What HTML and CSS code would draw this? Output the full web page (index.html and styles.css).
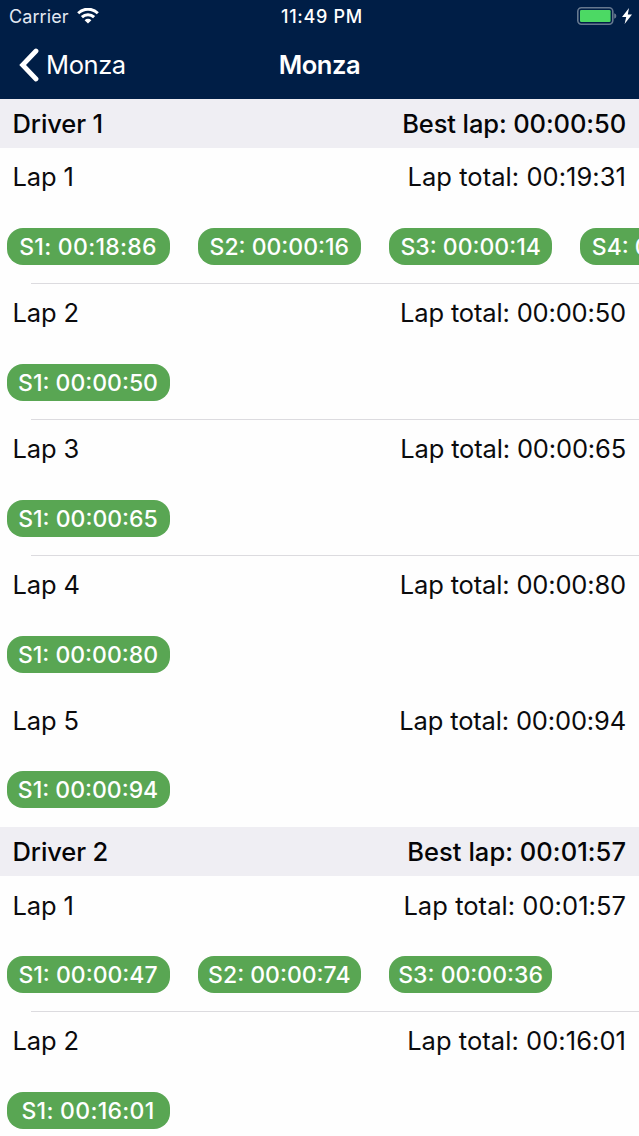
FILE: index.html
```html
<!DOCTYPE html>
<html lang="en">
<head>
    <meta charset="utf-8">
    <title>Monza</title>
    <link rel="stylesheet" href="styles.css">
</head>

<body>
    <header>
        <div class="status">
            <div class="carrier">
                <span>Carrier</span>
                <svg class="wifi" width="22" height="16" viewBox="0 0 22 16">
                    <path d="M1.2 5.2a14 14 0 0 1 19.6 0" />
                    <path d="M4.9 9.2a8.8 8.8 0 0 1 12.2 0" />
                    <path class="dot" d="M11 15.6l-3.4-3.4a4.9 4.9 0 0 1 6.8 0z" />
                </svg>
            </div>
            <div class="time">11:49 PM</div>
            <div class="power">
                <svg class="battery" width="40" height="18" viewBox="0 0 40 18">
                    <rect class="case" x="0.8" y="0.8" width="35" height="16.4" rx="3.6" />
                    <rect class="level" x="3" y="3" width="30.6" height="12" rx="1.2" />
                    <path class="cap" d="M37.2 6.2q2.2 .8 2.2 2.8t-2.2 2.8z" />
                </svg>
                <svg class="bolt" width="10" height="16" viewBox="0 0 10 16">
                    <path d="M7 0L0 9h4.2L2.6 16 10 6.6H5.8z" />
                </svg>
            </div>
        </div>
        <nav>
            <a class="back">
                <svg width="20" height="34" viewBox="0 0 20 34">
                    <path d="M17 3L3.6 17 17 31" />
                </svg>
                <span>Monza</span>
            </a>
            <h1>Monza</h1>
        </nav>
    </header>

    <section>
        <h2><span>Driver 1</span><span class="best">Best lap: 00:00:50</span></h2>
        <div class="lap">
            <div class="info"><span>Lap 1</span><span class="total wide">Lap total: 00:19:31</span></div>
            <div class="sectors">
                <span class="sector wide">S1: 00:18:86</span>
                <span class="sector">S2: 00:00:16</span>
                <span class="sector">S3: 00:00:14</span>
                <span class="sector">S4: 00:00:15</span>
            </div>
        </div>
        <div class="lap">
            <div class="info"><span>Lap 2</span><span class="total">Lap total: 00:00:50</span></div>
            <div class="sectors">
                <span class="sector">S1: 00:00:50</span>
            </div>
        </div>
        <div class="lap">
            <div class="info"><span>Lap 3</span><span class="total">Lap total: 00:00:65</span></div>
            <div class="sectors">
                <span class="sector">S1: 00:00:65</span>
            </div>
        </div>
        <div class="lap no-line">
            <div class="info"><span>Lap 4</span><span class="total">Lap total: 00:00:80</span></div>
            <div class="sectors">
                <span class="sector">S1: 00:00:80</span>
            </div>
        </div>
        <div class="lap no-line">
            <div class="info"><span>Lap 5</span><span class="total">Lap total: 00:00:94</span></div>
            <div class="sectors">
                <span class="sector">S1: 00:00:94</span>
            </div>
        </div>
    </section>

    <section>
        <h2><span>Driver 2</span><span class="best wide">Best lap: 00:01:57</span></h2>
        <div class="lap">
            <div class="info"><span>Lap 1</span><span class="total wide">Lap total: 00:01:57</span></div>
            <div class="sectors">
                <span class="sector">S1: 00:00:47</span>
                <span class="sector">S2: 00:00:74</span>
                <span class="sector">S3: 00:00:36</span>
            </div>
        </div>
        <div class="lap no-line">
            <div class="info"><span>Lap 2</span><span class="total wide">Lap total: 00:16:01</span></div>
            <div class="sectors">
                <span class="sector wide">S1: 00:16:01</span>
            </div>
        </div>
    </section>
</body>
</html>
```
FILE: styles.css
```css
body {
    font-family: Inter, "Liberation Sans", sans-serif;
    font-size: 25.5px;
    color: #0b0b0d;
    background-color: #fefefe;
    height: 1136px;
    margin: 0;
    overflow: hidden;
}
header {
    height: 99px;
    background-color: #001e46;
    color: #fff;
}
.status {
    display: grid;
    grid-template-columns: 1fr auto 1fr;
    align-items: center;
    height: 32px;
    padding: 0 7px 0 9px;
    font-size: 18px;
}
.carrier {
    display: flex;
    align-items: center;
    gap: 8px;
    color: #e3e9f2;
    letter-spacing: 0.1px;
}
.wifi path {
    fill: none;
    stroke: #fff;
    stroke-width: 3;
}
.wifi .dot {
    fill: #fff;
    stroke: none;
}
.time {
    font-weight: 500;
    letter-spacing: 0.7px;
    padding-left: 3px;
}
.power {
    display: flex;
    align-items: center;
    justify-content: flex-end;
    gap: 5px;
}
.case {
    fill: none;
    stroke: #66788f;
    stroke-width: 1.6;
}
.level {
    fill: #4cd964;
}
.cap {
    fill: #66788f;
}
.bolt {
    fill: #fff;
}
nav {
    display: grid;
    grid-template-columns: 1fr auto 1fr;
    align-items: center;
    height: 66px;
    padding: 0 19px;
    letter-spacing: -0.4px;
}
.back {
    display: flex;
    align-items: center;
    gap: 7px;
}
.back span,
h1 {
    line-height: 30px;
    padding-bottom: 1px;
}
.back path {
    fill: none;
    stroke: #fff;
    stroke-width: 4.8;
    stroke-linecap: round;
}
h1 {
    font-size: 25.5px;
    font-weight: 600;
    margin: 0;
}
h2 {
    display: flex;
    justify-content: space-between;
    align-items: center;
    height: 49.2px;
    padding: 0 13px 0 12.5px;
    margin: 0;
    font-size: 25.5px;
    font-weight: 500;
    letter-spacing: -0.1px;
    color: #050507;
    background-color: #efeef3;
}
.lap {
    position: relative;
    height: 135.8px;
}
/* inset separator */
.lap::after {
    content: "";
    position: absolute;
    left: 31px;
    right: 0;
    bottom: 0;
    height: 1px;
    background-color: #dcdbdf;
}
.no-line::after {
    display: none;
}
.info {
    display: flex;
    justify-content: space-between;
    align-items: center;
    height: 57.4px;
    padding: 0 13px 0 12.5px;
    letter-spacing: -0.16px;
}
.sectors {
    display: flex;
    gap: 28.3px;
    padding: 22.6px 0 0 6.5px;
    overflow: hidden;
}
.sector {
    flex: none;
    width: 163px;
    height: 37px;
    line-height: 38px;
    border-radius: 16px;
    background-color: #59a653;
    color: #fff;
    font-size: 23px;
    font-weight: 450;
    text-align: center;
}
.wide {
    letter-spacing: 0.05px;
}
.sector.wide {
    letter-spacing: 0.3px;
}
```
